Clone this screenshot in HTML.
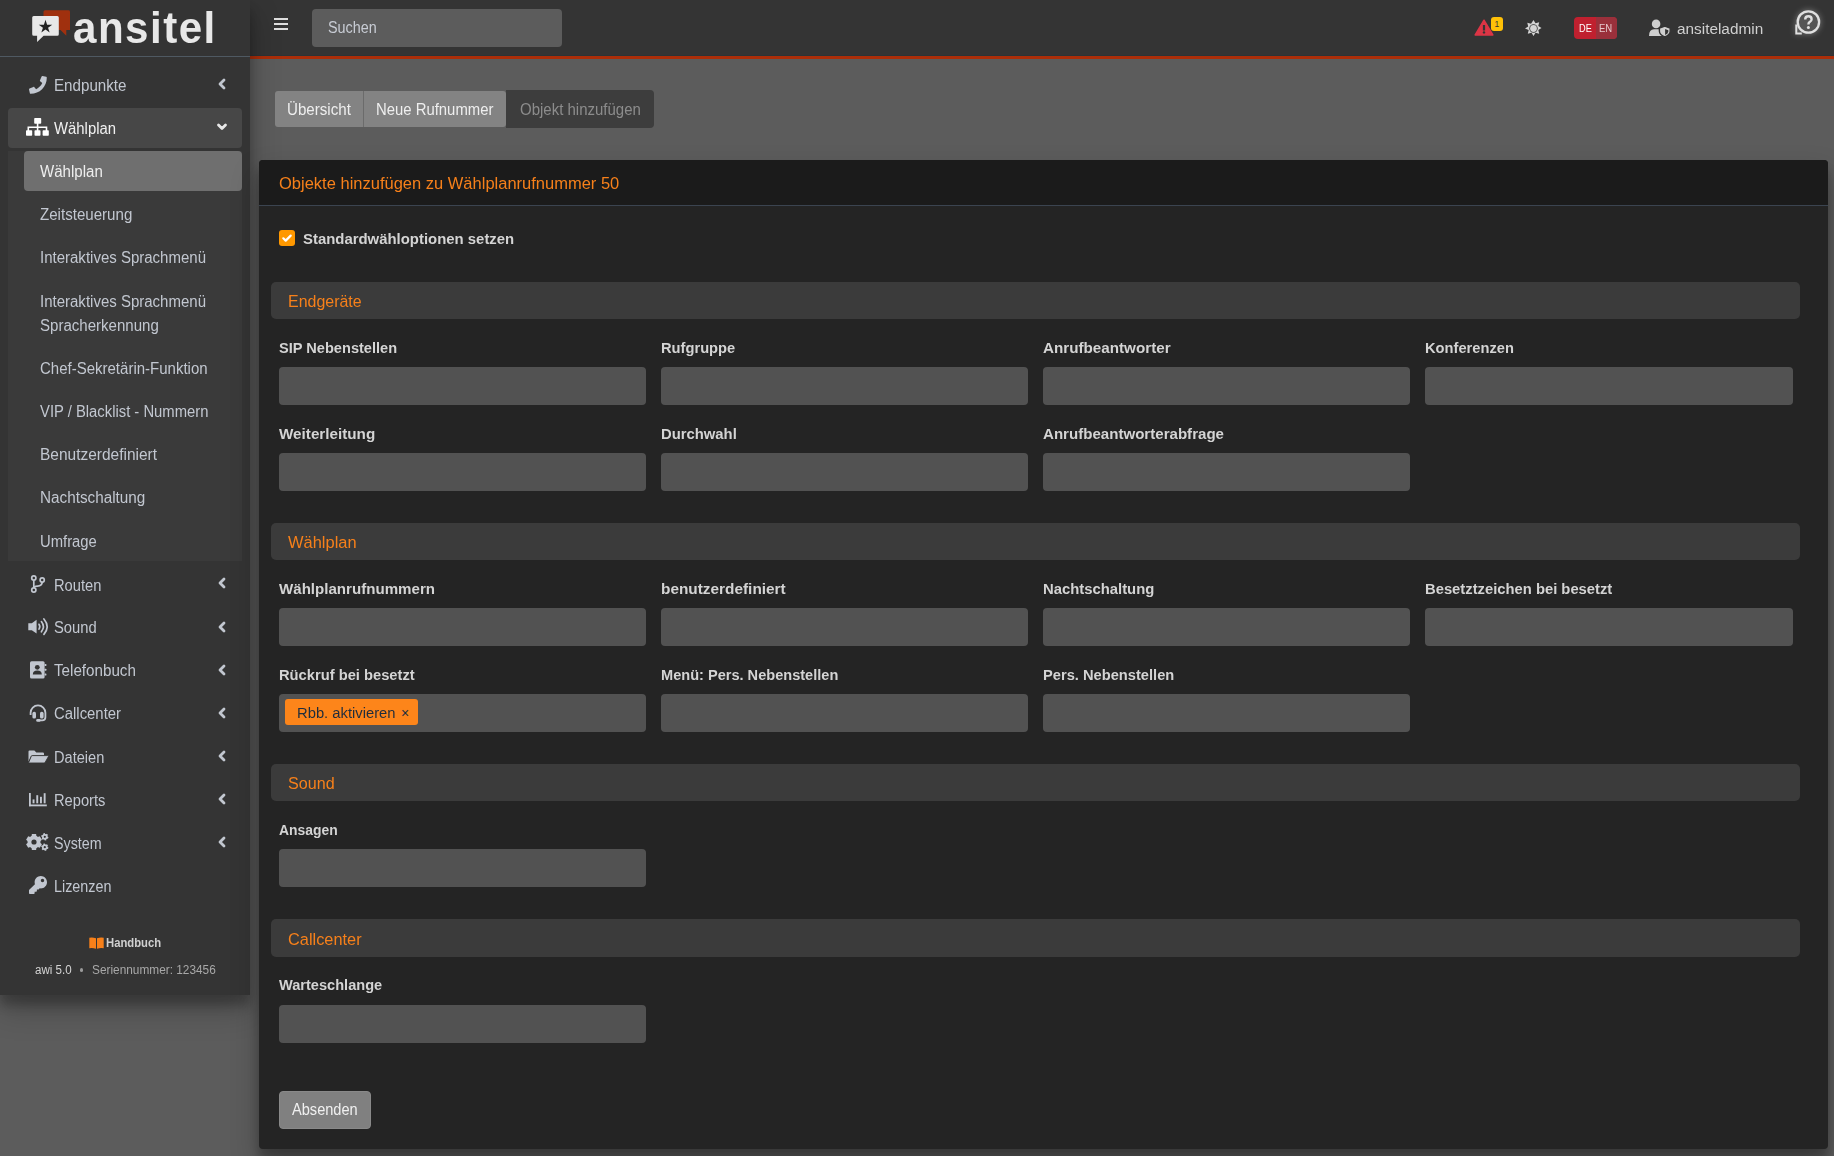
<!DOCTYPE html>
<html><head><meta charset="utf-8">
<style>
*{box-sizing:border-box}
html,body{margin:0;padding:0}
body{width:1834px;height:1156px;overflow:hidden;background:#5c5c5c;font-family:"Liberation Sans",sans-serif;position:relative}
.t{position:absolute;white-space:nowrap;transform-origin:0 0}
.r{position:absolute}
svg{position:absolute;overflow:visible}
</style></head><body>
<div class="r" style="left:250px;top:0px;width:1584px;height:56px;background:#343434;"></div>
<div class="r" style="left:250px;top:55px;width:1584px;height:1px;background:#2c3336;"></div>
<div class="r" style="left:250px;top:56px;width:1584px;height:3px;background:#ab2e09;"></div>
<div class="r" style="left:0px;top:0px;width:250px;height:995px;background:#343434;box-shadow:0 14px 28px rgba(0,0,0,.25),0 10px 10px rgba(0,0,0,.22);"></div>
<div class="r" style="left:0px;top:56px;width:250px;height:1px;background:#4f5962;"></div>
<svg style="left:30px;top:8px" width="44" height="36" viewBox="0 0 44 36">
<path d="M15 2.3H38.6Q40 2.3 40 3.7V21.9H36.3V27.8L30.5 21.9H13.5V3.8Q13.5 2.3 15 2.3z" fill="#a0300e"/>
<path d="M3.7 8H27.3Q28.8 8 28.8 9.5V26.3Q28.8 27.8 27.3 27.8H13.6L7.1 34V27.8H3.7Q2.2 27.8 2.2 26.3V9.5Q2.2 8 3.7 8z" fill="#e8e8e8"/>
<path d="M15.50 11.80 L17.09 16.69 L22.22 16.69 L18.07 19.70 L19.66 24.59 L15.50 21.57 L11.34 24.59 L12.93 19.70 L8.78 16.69 L13.91 16.69z" fill="#222"/>
</svg>
<div class="t" style="left:73.2px;top:-1.51px;font-size:45px;line-height:58px;color:#e8e8e8;font-weight:bold;letter-spacing:1.6px;transform:scaleX(0.9352);">ansitel</div>
<div class="t" style="left:54px;top:75.11px;font-size:16px;line-height:21px;color:#c2c7d0;transform:scaleX(0.9475);">Endpunkte</div>
<div class="r" style="left:8px;top:108px;width:234px;height:40px;background:#474747;border-radius:4px;"></div>
<div class="t" style="left:54px;top:118.20px;font-size:16px;line-height:21px;color:#f0f0f0;transform:scaleX(0.9295);">Wählplan</div>
<div class="r" style="left:8px;top:151px;width:234px;height:410px;background:#3a3a3a;"></div>
<div class="r" style="left:24px;top:151px;width:218px;height:40px;background:#6f6f6f;border-radius:4px;"></div>
<div class="t" style="left:40px;top:161.11px;font-size:16px;line-height:21px;color:#eeeeee;transform:scaleX(0.9415);">Wählplan</div>
<div class="t" style="left:40px;top:204.00px;font-size:16px;line-height:21px;color:#c2c7d0;transform:scaleX(0.9433);">Zeitsteuerung</div>
<div class="t" style="left:40px;top:246.90px;font-size:16px;line-height:21px;color:#c2c7d0;transform:scaleX(0.9379);">Interaktives Sprachmenü</div>
<div class="t" style="left:40px;top:291.20px;font-size:16px;line-height:21px;color:#c2c7d0;transform:scaleX(0.9379);">Interaktives Sprachmenü</div>
<div class="t" style="left:40px;top:314.61px;font-size:16px;line-height:21px;color:#c2c7d0;transform:scaleX(0.9405);">Spracherkennung</div>
<div class="t" style="left:40px;top:357.90px;font-size:16px;line-height:21px;color:#c2c7d0;transform:scaleX(0.9376);">Chef-Sekretärin-Funktion</div>
<div class="t" style="left:40px;top:401.00px;font-size:16px;line-height:21px;color:#c2c7d0;transform:scaleX(0.9254);">VIP / Blacklist - Nummern</div>
<div class="t" style="left:40px;top:443.81px;font-size:16px;line-height:21px;color:#c2c7d0;transform:scaleX(0.9672);">Benutzerdefiniert</div>
<div class="t" style="left:40px;top:487.00px;font-size:16px;line-height:21px;color:#c2c7d0;transform:scaleX(0.9547);">Nachtschaltung</div>
<div class="t" style="left:40px;top:530.61px;font-size:16px;line-height:21px;color:#c2c7d0;transform:scaleX(0.9257);">Umfrage</div>
<div class="t" style="left:54px;top:574.50px;font-size:16px;line-height:21px;color:#c2c7d0;transform:scaleX(0.9168);">Routen</div>
<div class="t" style="left:54px;top:617.00px;font-size:16px;line-height:21px;color:#c2c7d0;transform:scaleX(0.9229);">Sound</div>
<div class="t" style="left:54px;top:660.11px;font-size:16px;line-height:21px;color:#c2c7d0;transform:scaleX(0.9490);">Telefonbuch</div>
<div class="t" style="left:54px;top:703.11px;font-size:16px;line-height:21px;color:#c2c7d0;transform:scaleX(0.9302);">Callcenter</div>
<div class="t" style="left:54px;top:746.90px;font-size:16px;line-height:21px;color:#c2c7d0;transform:scaleX(0.9120);">Dateien</div>
<div class="t" style="left:54px;top:789.90px;font-size:16px;line-height:21px;color:#c2c7d0;transform:scaleX(0.9173);">Reports</div>
<div class="t" style="left:54px;top:832.50px;font-size:16px;line-height:21px;color:#c2c7d0;transform:scaleX(0.8923);">System</div>
<div class="t" style="left:54px;top:876.00px;font-size:16px;line-height:21px;color:#c2c7d0;transform:scaleX(0.8978);">Lizenzen</div>
<svg style="left:218px;top:79px" width="8" height="10" viewBox="0 0 8 10"><path d="M6 1L2 5l4 4" fill="none" stroke="#c2c7d0" stroke-width="2.8" stroke-linecap="round" stroke-linejoin="round"/></svg>
<svg style="left:218px;top:578px" width="8" height="10" viewBox="0 0 8 10"><path d="M6 1L2 5l4 4" fill="none" stroke="#c2c7d0" stroke-width="2.8" stroke-linecap="round" stroke-linejoin="round"/></svg>
<svg style="left:218px;top:622px" width="8" height="10" viewBox="0 0 8 10"><path d="M6 1L2 5l4 4" fill="none" stroke="#c2c7d0" stroke-width="2.8" stroke-linecap="round" stroke-linejoin="round"/></svg>
<svg style="left:218px;top:665px" width="8" height="10" viewBox="0 0 8 10"><path d="M6 1L2 5l4 4" fill="none" stroke="#c2c7d0" stroke-width="2.8" stroke-linecap="round" stroke-linejoin="round"/></svg>
<svg style="left:218px;top:708px" width="8" height="10" viewBox="0 0 8 10"><path d="M6 1L2 5l4 4" fill="none" stroke="#c2c7d0" stroke-width="2.8" stroke-linecap="round" stroke-linejoin="round"/></svg>
<svg style="left:218px;top:751px" width="8" height="10" viewBox="0 0 8 10"><path d="M6 1L2 5l4 4" fill="none" stroke="#c2c7d0" stroke-width="2.8" stroke-linecap="round" stroke-linejoin="round"/></svg>
<svg style="left:218px;top:794px" width="8" height="10" viewBox="0 0 8 10"><path d="M6 1L2 5l4 4" fill="none" stroke="#c2c7d0" stroke-width="2.8" stroke-linecap="round" stroke-linejoin="round"/></svg>
<svg style="left:218px;top:837px" width="8" height="10" viewBox="0 0 8 10"><path d="M6 1L2 5l4 4" fill="none" stroke="#c2c7d0" stroke-width="2.8" stroke-linecap="round" stroke-linejoin="round"/></svg>
<svg style="left:217px;top:123px" width="10" height="8" viewBox="0 0 10 8"><path d="M1.5 2L5 5.5 8.5 2" fill="none" stroke="#e8e8e8" stroke-width="2.8" stroke-linecap="round" stroke-linejoin="round"/></svg>
<svg style="left:28.6px;top:75.6px" width="17.8" height="17.8" viewBox="0 0 512 512"><path d="M493.4 24.6l-104-24c-11.3-2.6-22.9 3.3-27.5 13.9l-48 112c-4.2 9.8-1.4 21.3 6.9 28l60.6 49.6c-36 76.7-98.9 140.5-177.2 177.2l-49.6-60.6c-6.8-8.3-18.2-11.1-28-6.9l-112 48C3.9 366.5-2 378.1.6 389.4l24 104C27.1 504.2 36.7 512 48 512c256.1 0 464-207.5 464-464 0-11.2-7.7-20.9-18.6-23.4z" fill="#c2c7d0"/></svg>
<svg style="left:25.9px;top:118.3px" width="23" height="18" viewBox="0 0 23 18"><g fill="#ffffff"><rect x="8.2" y="0" width="7" height="5.7" rx="0.8"/><rect x="0" y="12.2" width="6.2" height="5.6" rx="0.8"/><rect x="8.5" y="12.2" width="6" height="5.6" rx="0.8"/><rect x="16.6" y="12.2" width="6.2" height="5.6" rx="0.8"/><rect x="10.8" y="5" width="1.6" height="8"/><path d="M2.3 13V9.2H20.5V13" fill="none" stroke="#fff" stroke-width="1.6"/></g></svg>
<svg style="left:30.5px;top:574.5px" width="14" height="18" viewBox="0 0 14 18"><g fill="none" stroke="#c2c7d0" stroke-width="1.7"><circle cx="2.8" cy="3" r="2.1"/><circle cx="11.2" cy="5" r="2.1"/><circle cx="2.8" cy="15" r="2.1"/><path d="M2.8 5.1V12.9"/><path d="M11.2 7.1Q11.2 11 6.5 11.2Q2.8 11.5 2.8 13"/></g></svg>
<svg style="left:27.5px;top:617.5px" width="21" height="18" viewBox="0 0 21 18"><path d="M0.3 5.2H3.8L8.6 1.8V15.6L3.8 12.3H0.3z" fill="#c2c7d0"/><g fill="none" stroke="#c2c7d0" stroke-width="1.7" stroke-linecap="round"><path d="M11 6.3Q12.6 8.7 11 11.1"/><path d="M13.4 3.6Q17.4 8.7 13.4 13.8"/><path d="M15.9 1Q22.4 8.7 15.9 16.4"/></g></svg>
<svg style="left:30px;top:660.5px" width="16.5" height="18" viewBox="0 0 16.5 18"><rect x="0" y="0.2" width="14.6" height="17.4" rx="1.6" fill="#c2c7d0"/><g fill="#c2c7d0"><rect x="14.6" y="3" width="1.8" height="2" rx="0.5"/><rect x="14.6" y="7.8" width="1.8" height="2" rx="0.5"/><rect x="14.6" y="12.6" width="1.8" height="2" rx="0.5"/></g><circle cx="7.3" cy="6.3" r="2.4" fill="#343434"/><path d="M2.8 13.6Q2.8 9.6 7.3 9.6Q11.8 9.6 11.8 13.6z" fill="#343434"/></svg>
<svg style="left:28.5px;top:703.5px" width="18" height="18" viewBox="0 0 18 18"><path d="M1.6 11V8.8A7.4 7.4 0 0 1 16.4 8.8V13.3Q16.4 16.4 13.2 16.4H9.5" fill="none" stroke="#c2c7d0" stroke-width="1.8"/><rect x="3.4" y="7.8" width="3.6" height="6.8" rx="1.6" fill="#c2c7d0"/><rect x="11" y="7.8" width="3.6" height="6.8" rx="1.6" fill="#c2c7d0"/><rect x="7.2" y="15" width="4.4" height="2.8" rx="1.3" fill="#c2c7d0"/></svg>
<svg style="left:27.5px;top:749.8px" width="21" height="13.5" viewBox="0 0 21 13.5"><path d="M0.5 12.5V1.5Q0.5 0.5 1.5 0.5H6.4L8.3 2.4H14.9Q16 2.4 16 3.5V5.2H4.6Q3.5 5.2 3 6.2L0.5 11.6z" fill="#c2c7d0"/><path d="M4.4 5.6H19.8Q20.9 5.6 20.4 6.6L17.2 12.3Q16.8 13 16 13H1.2Q0.3 13 0.8 12.1L3.2 6.4Q3.6 5.6 4.4 5.6z" fill="#c2c7d0" stroke="#343434" stroke-width="0.9"/></svg>
<svg style="left:28.5px;top:792.5px" width="18" height="14" viewBox="0 0 18 14"><g fill="#c2c7d0"><rect x="0" y="0" width="1.8" height="13.2"/><rect x="0" y="11.5" width="17.8" height="1.8"/><rect x="3.6" y="6.4" width="1.9" height="3.9"/><rect x="7.3" y="2.2" width="1.9" height="8.1"/><rect x="11" y="3.8" width="1.9" height="6.5"/><rect x="14.7" y="0.2" width="1.9" height="10.1"/></g></svg>
<svg style="left:25.8px;top:833.3px" width="23" height="19" viewBox="0 0 23 19"><path d="M5.55 3.30 L5.89 1.07 L10.11 1.07 L10.45 3.30 L11.71 4.03 L13.81 3.21 L15.92 6.86 L14.16 8.27 L14.16 9.73 L15.92 11.14 L13.81 14.79 L11.71 13.97 L10.45 14.70 L10.11 16.93 L5.89 16.93 L5.55 14.70 L4.29 13.97 L2.19 14.79 L0.08 11.14 L1.84 9.73 L1.84 8.27 L0.08 6.86 L2.19 3.21 L4.29 4.03z" fill="#c2c7d0"/><circle cx="8" cy="9" r="6.4" fill="#c2c7d0"/><circle cx="8" cy="9" r="2.6" fill="#343434"/><path d="M21.40 3.64 L22.49 4.06 L21.99 5.67 L20.85 5.39 L20.23 5.97 L20.42 7.13 L18.77 7.50 L18.45 6.38 L17.64 6.13 L16.73 6.87 L15.58 5.63 L16.39 4.78 L16.20 3.96 L15.11 3.54 L15.61 1.93 L16.75 2.21 L17.37 1.63 L17.18 0.47 L18.83 0.10 L19.15 1.22 L19.96 1.47 L20.87 0.73 L22.02 1.97 L21.21 2.82z" fill="#c2c7d0"/><circle cx="18.8" cy="3.8" r="2.7" fill="#c2c7d0"/><circle cx="18.8" cy="3.8" r="1.1" fill="#343434"/><path d="M21.40 14.04 L22.49 14.46 L21.99 16.07 L20.85 15.79 L20.23 16.37 L20.42 17.53 L18.77 17.90 L18.45 16.78 L17.64 16.53 L16.73 17.27 L15.58 16.03 L16.39 15.18 L16.20 14.36 L15.11 13.94 L15.61 12.33 L16.75 12.61 L17.37 12.03 L17.18 10.87 L18.83 10.50 L19.15 11.62 L19.96 11.87 L20.87 11.13 L22.02 12.37 L21.21 13.22z" fill="#c2c7d0"/><circle cx="18.8" cy="14.2" r="2.7" fill="#c2c7d0"/><circle cx="18.8" cy="14.2" r="1.1" fill="#343434"/></svg>
<svg style="left:28.6px;top:876.3px" width="18" height="18" viewBox="0 0 512 512"><path d="M512 176.001C512 273.203 433.202 352 336 352c-11.22 0-22.190-1.062-32.827-3.069l-24.012 27.014A23.999 23.999 0 0 1 261.223 384H224v40c0 13.255-10.745 24-24 24h-40v40c0 13.255-10.745 24-24 24H24c-13.255 0-24-10.745-24-24v-78.059c0-6.365 2.529-12.470 7.029-16.971l161.802-161.802C163.108 213.814 160 195.271 160 176 160 78.798 238.797.001 335.999 0 433.488-.001 512 78.511 512 176.001zM336 128c0 26.510 21.490 48 48 48s48-21.490 48-48-21.490-48-48-48-48 21.490-48 48z" fill="#c2c7d0"/></svg>
<svg style="left:88.5px;top:936.5px" width="15" height="12" viewBox="0 0 15 12"><path d="M0.3 0.8Q3.5 0 7 1.3V11.8Q3.5 10.6 0.3 11.3z" fill="#f7801a"/><path d="M14.7 0.8Q11.5 0 8 1.3V11.8Q11.5 10.6 14.7 11.3z" fill="#f7801a"/></svg>
<div class="t" style="left:106px;top:933.90px;font-size:13px;line-height:17px;color:#d0d0d0;font-weight:bold;transform:scaleX(0.8669);">Handbuch</div>
<div class="t" style="left:34.6px;top:961.80px;font-size:12.5px;line-height:16px;color:#d4d4d4;transform:scaleX(0.9240);">awi 5.0</div>
<div class="r" style="left:79.7px;top:968.4px;width:3.4px;height:3.4px;background:#9a9a9a;border-radius:2px;"></div>
<div class="t" style="left:91.6px;top:961.80px;font-size:12.5px;line-height:16px;color:#a8a8a8;transform:scaleX(0.9476);">Seriennummer: 123456</div>
<div class="r" style="left:274px;top:17.5px;width:14px;height:2.2px;background:#dddddd;"></div>
<div class="r" style="left:274px;top:22.5px;width:14px;height:2.2px;background:#dddddd;"></div>
<div class="r" style="left:274px;top:27.5px;width:14px;height:2.2px;background:#dddddd;"></div>
<div class="r" style="left:312px;top:9px;width:250px;height:38px;background:#5c5c5c;border-radius:4px;"></div>
<div class="t" style="left:327.7px;top:16.80px;font-size:15.8px;line-height:21px;color:#c8ccd4;transform:scaleX(0.9108);">Suchen</div>
<svg style="left:1474px;top:19px" width="20" height="17" viewBox="0 0 20 17"><path d="M10 1.2L18.8 16H1.2z" fill="#dc3545" stroke="#dc3545" stroke-width="1.5" stroke-linejoin="round"/><rect x="8.9" y="6" width="2.2" height="5.5" fill="#343434"/><circle cx="10" cy="13.4" r="1.2" fill="#343434"/></svg>
<div class="r" style="left:1491px;top:17px;width:12px;height:14px;background:#ffc107;border-radius:3px;"></div>
<div class="t" style="left:1494.5px;top:19.01px;font-size:8.5px;line-height:11px;color:#343434;">1</div>
<svg style="left:1525px;top:20px" width="17" height="17" viewBox="0 0 17 17"><g fill="#d4d4d4"><path d="M8.5 0l2 3.2 3.7-.9-.9 3.7 3.2 2-3.2 2 .9 3.7-3.7-.9-2 3.2-2-3.2-3.7.9.9-3.7L0 8.5l3.2-2-.9-3.7 3.7.9z"/></g><circle cx="8.5" cy="8.5" r="4.2" fill="#343434"/><circle cx="8.5" cy="8.5" r="3.4" fill="#d4d4d4"/></svg>
<div class="r" style="left:1574px;top:17px;width:43px;height:22px;background:#c0202f;border-radius:4px;"></div>
<div class="r" style="left:1596px;top:17px;width:21px;height:22px;background:#9a303b;border-radius:0 4px 4px 0;"></div>
<div class="t" style="left:1578.7px;top:20.70px;font-size:11.5px;line-height:15px;color:#ffffff;transform:scaleX(0.8008);">DE</div>
<div class="t" style="left:1599.4px;top:20.70px;font-size:11.5px;line-height:15px;color:#e6c8cc;transform:scaleX(0.8258);">EN</div>
<svg style="left:1648px;top:19px" width="22" height="17" viewBox="0 0 22 17"><circle cx="8.1" cy="4.9" r="4.3" fill="#cfcfcf"/><path d="M1 17Q1 10.2 6 10.2H10.5Q13.5 10.2 14 12.5V17z" fill="#cfcfcf"/><path d="M16.8 7.2L22.2 9.2V12.2Q22.2 15.6 16.8 17.8Q11.4 15.6 11.4 12.2V9.2z" fill="#cfcfcf" stroke="#333" stroke-width="1.4"/><path d="M17.1 10.1L20.3 11.3V12.4Q20.3 14.4 17.1 15.9z" fill="#333"/></svg>
<div class="t" style="left:1677px;top:18.91px;font-size:15.5px;line-height:20px;color:#d0d0d0;transform:scaleX(0.9904);">ansiteladmin</div>
<svg style="left:1795px;top:9px;filter:drop-shadow(0 0 3px rgba(255,255,255,.35))" width="27" height="27" viewBox="0 0 27 27"><path d="M1.3 15.6V24.5H6.8" fill="none" stroke="#e0e0e0" stroke-width="2"/><circle cx="13.4" cy="13" r="10.7" fill="#555" stroke="#e0e0e0" stroke-width="2.3"/><path d="M10.2 10.4Q10.2 7.2 13.4 7.2Q16.6 7.2 16.6 10.2Q16.6 12 14.8 12.9Q13.4 13.6 13.4 15.4" fill="none" stroke="#e0e0e0" stroke-width="2.4"/><circle cx="13.4" cy="18.6" r="1.5" fill="#e0e0e0"/></svg>
<div class="r" style="left:275px;top:90.5px;width:231px;height:36.5px;background:#838383;border-radius:3px;"></div>
<div class="r" style="left:363px;top:90.5px;width:1px;height:36.5px;background:#6b6b6b;"></div>
<div class="r" style="left:506px;top:90px;width:148px;height:37.5px;background:#3d3d3d;border-radius:0 4px 4px 0;"></div>
<div class="t" style="left:286.8px;top:98.80px;font-size:15.8px;line-height:21px;color:#eeeeee;transform:scaleX(0.9575);">Übersicht</div>
<div class="t" style="left:376.2px;top:98.80px;font-size:15.8px;line-height:21px;color:#eeeeee;transform:scaleX(0.9417);">Neue Rufnummer</div>
<div class="t" style="left:519.7px;top:98.80px;font-size:15.8px;line-height:21px;color:#8c8c8c;transform:scaleX(0.9494);">Objekt hinzufügen</div>
<div class="r" style="left:259px;top:160px;width:1569px;height:988.5px;background:#242424;border-radius:4px;box-shadow:0 14px 28px rgba(0,0,0,.25),0 10px 10px rgba(0,0,0,.22);"></div>
<div class="r" style="left:259px;top:160px;width:1569px;height:45px;background:#1b1b1b;border-radius:4px 4px 0 0;"></div>
<div class="r" style="left:259px;top:205px;width:1569px;height:1px;background:#3b4450;"></div>
<div class="t" style="left:278.7px;top:173.01px;font-size:16.8px;line-height:22px;color:#f7801a;transform:scaleX(0.9833);">Objekte hinzufügen zu Wählplanrufnummer 50</div>
<div class="r" style="left:279px;top:230px;width:16px;height:16px;background:#ff9800;border-radius:3px;"></div>
<svg style="left:279px;top:230px" width="16" height="16" viewBox="0 0 16 16"><path d="M4.3 8.3l2.4 2.3 5-5" fill="none" stroke="#fff" stroke-width="2.2" stroke-linecap="round" stroke-linejoin="round"/></svg>
<div class="t" style="left:303.1px;top:229.20px;font-size:15.5px;line-height:20px;color:#d4d4d4;font-weight:bold;transform:scaleX(0.9617);">Standardwähloptionen setzen</div>
<div class="r" style="left:271px;top:282px;width:1529px;height:37px;background:#3b3b3b;border-radius:5px;"></div>
<div class="t" style="left:287.5px;top:290.21px;font-size:17.2px;line-height:22px;color:#f7801a;transform:scaleX(0.9291);">Endgeräte</div>
<div class="t" style="left:279.3px;top:339.01px;font-size:14.5px;line-height:19px;color:#d4d4d4;font-weight:bold;transform:scaleX(1.0060);">SIP Nebenstellen</div>
<div class="r" style="left:279px;top:367px;width:367px;height:38px;background:#525252;border-radius:4px;"></div>
<div class="t" style="left:661.3px;top:339.01px;font-size:14.5px;line-height:19px;color:#d4d4d4;font-weight:bold;transform:scaleX(1.0123);">Rufgruppe</div>
<div class="r" style="left:661px;top:367px;width:367px;height:38px;background:#525252;border-radius:4px;"></div>
<div class="t" style="left:1043.3px;top:339.01px;font-size:14.5px;line-height:19px;color:#d4d4d4;font-weight:bold;transform:scaleX(1.0489);">Anrufbeantworter</div>
<div class="r" style="left:1043px;top:367px;width:367px;height:38px;background:#525252;border-radius:4px;"></div>
<div class="t" style="left:1425.3px;top:339.01px;font-size:14.5px;line-height:19px;color:#d4d4d4;font-weight:bold;transform:scaleX(1.0122);">Konferenzen</div>
<div class="r" style="left:1425px;top:367px;width:368px;height:38px;background:#525252;border-radius:4px;"></div>
<div class="t" style="left:279.3px;top:425.01px;font-size:14.5px;line-height:19px;color:#d4d4d4;font-weight:bold;transform:scaleX(1.0505);">Weiterleitung</div>
<div class="r" style="left:279px;top:453px;width:367px;height:38px;background:#525252;border-radius:4px;"></div>
<div class="t" style="left:661.3px;top:425.01px;font-size:14.5px;line-height:19px;color:#d4d4d4;font-weight:bold;transform:scaleX(1.0226);">Durchwahl</div>
<div class="r" style="left:661px;top:453px;width:367px;height:38px;background:#525252;border-radius:4px;"></div>
<div class="t" style="left:1043.3px;top:425.01px;font-size:14.5px;line-height:19px;color:#d4d4d4;font-weight:bold;transform:scaleX(1.0400);">Anrufbeantworterabfrage</div>
<div class="r" style="left:1043px;top:453px;width:367px;height:38px;background:#525252;border-radius:4px;"></div>
<div class="r" style="left:271px;top:523px;width:1529px;height:37px;background:#3b3b3b;border-radius:5px;"></div>
<div class="t" style="left:287.5px;top:531.21px;font-size:17.2px;line-height:22px;color:#f7801a;transform:scaleX(0.9573);">Wählplan</div>
<div class="t" style="left:279.3px;top:580.01px;font-size:14.5px;line-height:19px;color:#d4d4d4;font-weight:bold;transform:scaleX(1.0411);">Wählplanrufnummern</div>
<div class="r" style="left:279px;top:608px;width:367px;height:38px;background:#525252;border-radius:4px;"></div>
<div class="t" style="left:661.3px;top:580.01px;font-size:14.5px;line-height:19px;color:#d4d4d4;font-weight:bold;transform:scaleX(1.0601);">benutzerdefiniert</div>
<div class="r" style="left:661px;top:608px;width:367px;height:38px;background:#525252;border-radius:4px;"></div>
<div class="t" style="left:1043.3px;top:580.01px;font-size:14.5px;line-height:19px;color:#d4d4d4;font-weight:bold;transform:scaleX(1.0233);">Nachtschaltung</div>
<div class="r" style="left:1043px;top:608px;width:367px;height:38px;background:#525252;border-radius:4px;"></div>
<div class="t" style="left:1425.3px;top:580.01px;font-size:14.5px;line-height:19px;color:#d4d4d4;font-weight:bold;transform:scaleX(1.0194);">Besetztzeichen bei besetzt</div>
<div class="r" style="left:1425px;top:608px;width:368px;height:38px;background:#525252;border-radius:4px;"></div>
<div class="t" style="left:279.3px;top:666.01px;font-size:14.5px;line-height:19px;color:#d4d4d4;font-weight:bold;transform:scaleX(1.0146);">Rückruf bei besetzt</div>
<div class="r" style="left:279px;top:694px;width:367px;height:38px;background:#525252;border-radius:4px;"></div>
<div class="t" style="left:661.3px;top:666.01px;font-size:14.5px;line-height:19px;color:#d4d4d4;font-weight:bold;transform:scaleX(1.0047);">Menü: Pers. Nebenstellen</div>
<div class="r" style="left:661px;top:694px;width:367px;height:38px;background:#525252;border-radius:4px;"></div>
<div class="t" style="left:1043.3px;top:666.01px;font-size:14.5px;line-height:19px;color:#d4d4d4;font-weight:bold;transform:scaleX(1.0119);">Pers. Nebenstellen</div>
<div class="r" style="left:1043px;top:694px;width:367px;height:38px;background:#525252;border-radius:4px;"></div>
<div class="r" style="left:285px;top:699px;width:133px;height:26px;background:#fd851a;border-radius:3px;"></div>
<div class="t" style="left:296.8px;top:703.90px;font-size:14.9px;line-height:19px;color:#1f2d3d;transform:scaleX(0.9917);">Rbb. aktivieren</div>
<div class="t" style="left:401px;top:703.51px;font-size:14px;line-height:18px;color:#1f2d3d;">×</div>
<div class="r" style="left:271px;top:764px;width:1529px;height:37px;background:#3b3b3b;border-radius:5px;"></div>
<div class="t" style="left:287.5px;top:772.21px;font-size:17.2px;line-height:22px;color:#f7801a;transform:scaleX(0.9376);">Sound</div>
<div class="t" style="left:279.3px;top:821.01px;font-size:14.5px;line-height:19px;color:#d4d4d4;font-weight:bold;transform:scaleX(0.9584);">Ansagen</div>
<div class="r" style="left:279px;top:849px;width:367px;height:38px;background:#525252;border-radius:4px;"></div>
<div class="r" style="left:271px;top:919px;width:1529px;height:38px;background:#3b3b3b;border-radius:5px;"></div>
<div class="t" style="left:287.5px;top:927.81px;font-size:17.2px;line-height:22px;color:#f7801a;transform:scaleX(0.9510);">Callcenter</div>
<div class="t" style="left:279.3px;top:976.01px;font-size:14.5px;line-height:19px;color:#d4d4d4;font-weight:bold;transform:scaleX(1.0058);">Warteschlange</div>
<div class="r" style="left:279px;top:1005px;width:367px;height:38px;background:#525252;border-radius:4px;"></div>
<div class="r" style="left:279px;top:1091px;width:92px;height:38px;background:#808080;border-radius:4px;border:1px solid #898989;"></div>
<div class="t" style="left:291.6px;top:1099.00px;font-size:16px;line-height:21px;color:#f0f0f0;transform:scaleX(0.9117);">Absenden</div>
</body></html>
